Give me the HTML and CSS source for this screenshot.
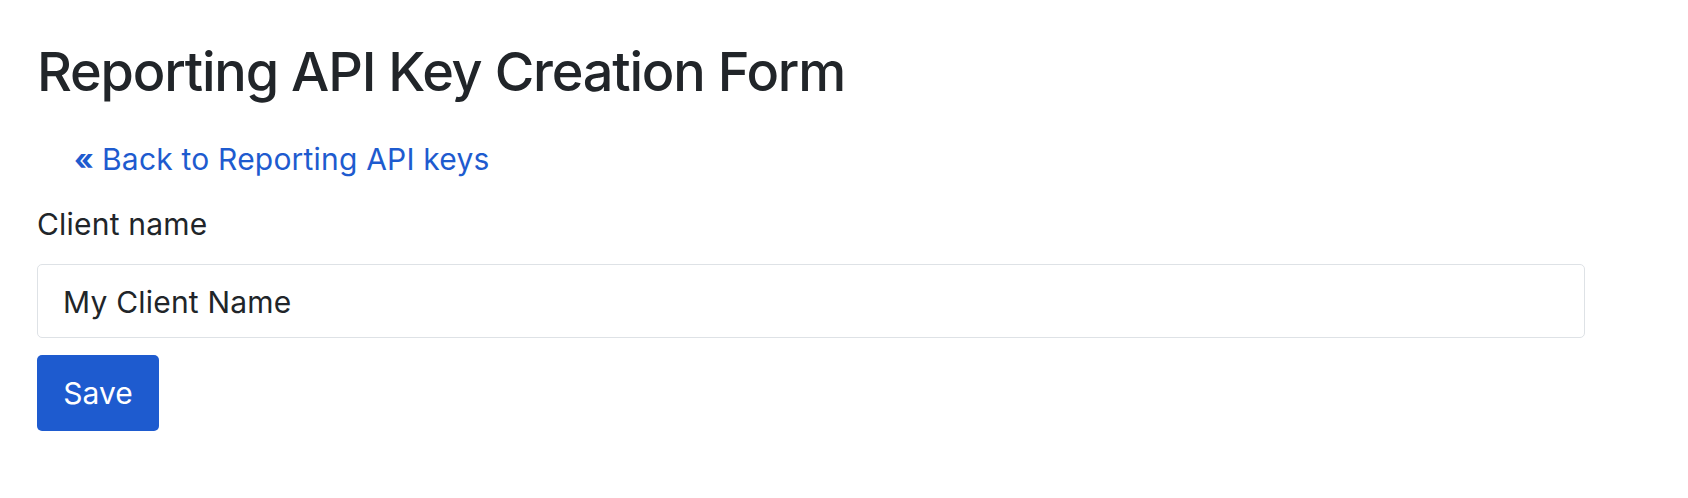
FILE: index.html
```html
<!DOCTYPE html>
<html lang="en">
<head>
<meta charset="utf-8">
<title>Reporting API Key Creation Form</title>
<link rel="stylesheet" href="styles.css">
</head>
<body>
<main class="page">
  <h1 class="title">Reporting API Key Creation Form</h1>
  <nav class="back">
    <a class="back-link" href="#"><span class="back-icon">«</span>Back to Reporting API keys</a>
  </nav>
  <form class="form">
    <label class="label" for="client-name">Client name</label>
    <input class="input" id="client-name" type="text" value="My Client Name">
    <div class="actions">
      <button class="btn" type="button">Save</button>
    </div>
  </form>
</main>
</body>
</html>
```
FILE: styles.css
```css
* { box-sizing: border-box; }
html, body { margin: 0; padding: 0; background: #ffffff; }
body {
  font-family: Inter, "Noto Sans", "Liberation Sans", sans-serif;
  color: #212529;
  font-size: 30px;
  line-height: 45px;
  letter-spacing: 0.2px;
}
.page {
  width: 1585px;
  padding: 39px 0 0 37px;
  display: flex;
  flex-direction: column;
}
.title {
  margin: 0;
  font-size: 54px;
  line-height: 65px;
  font-weight: 500;
  letter-spacing: -1.2px;
  color: #212529;
}
.back {
  margin-top: 33px;
  padding-left: 37px;
}
.back-link {
  color: #1e5bcf;
  text-decoration: none;
}
.back-icon {
  font-weight: 700;
  margin-right: 8px;
}
.form {
  margin-top: 20px;
  display: flex;
  flex-direction: column;
}
.label {
  display: block;
  color: #212529;
}
.input {
  margin-top: 17px;
  width: 100%;
  height: 74px;
  padding: 2px 25px 0;
  font: inherit;
  font-size: 30px;
  letter-spacing: 0.2px;
  color: #212529;
  background: #fff;
  border: 1.5px solid #dee2e6;
  border-radius: 5px;
  outline: none;
}
.actions {
  margin-top: 17px;
}
.btn {
  height: 76px;
  width: 122px;
  padding: 0;
  font: inherit;
  font-size: 30px;
  color: #ffffff;
  background: #1e5bcf;
  border: none;
  border-radius: 5px;
}
```
